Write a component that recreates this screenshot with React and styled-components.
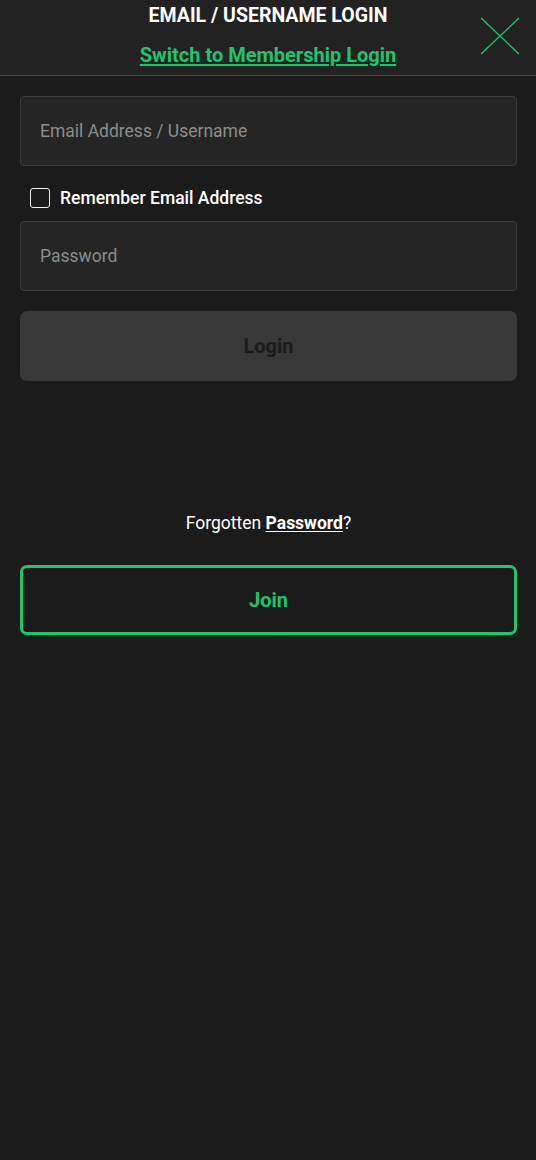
import React from 'react';
import styled, { createGlobalStyle } from 'styled-components';

const GlobalStyle = createGlobalStyle`
    html, body {
        margin: 0;
        padding: 0;
        background: #1b1b1b;
        font-family: Roboto, 'Liberation Sans', sans-serif;
    }
    * {
        box-sizing: border-box;
    }
`;

const Page = styled.div`
    min-height: 1160px;
    background: #1b1b1b;
    color: #fff;
`;

const Header = styled.header`
    position: relative;
    height: 76px;
    background: #222222;
    border-bottom: 1px solid #4b4a56;
    display: flex;
    flex-direction: column;
    align-items: center;
`;

const Title = styled.h1`
    margin: 5px 0 0;
    font-size: 19.5px;
    font-weight: 700;
    line-height: 22px;
    color: #fff;
`;

const SwitchLink = styled.a`
    margin-top: 16px;
    font-size: 20px;
    font-weight: 700;
    line-height: 24px;
    color: #1ec46e;
    text-decoration: underline;
    text-underline-offset: 2px;
    cursor: pointer;
`;

const CloseButton = styled.button`
    position: absolute;
    top: 17px;
    right: 16px;
    width: 40px;
    height: 38px;
    padding: 0;
    border: 0;
    background: none;
    cursor: pointer;
`;

const Form = styled.div`
    display: flex;
    flex-direction: column;
    padding: 20px 19px 0 20px;
`;

const Input = styled.input`
    width: 100%;
    height: 70px;
    padding: 0 19px;
    background: #252525;
    border: 1px solid #3b3b3b;
    border-radius: 4px;
    color: #fff;
    font-family: inherit;
    font-size: 17.5px;
    outline: none;

    &::placeholder {
        color: #8c8c8c;
    }
`;

const RememberRow = styled.label`
    display: flex;
    align-items: center;
    gap: 10px;
    height: 20px;
    margin: 22px 0 13px;
    padding-left: 10px;
    font-size: 17.5px;
    font-weight: 500;
    cursor: pointer;
`;

const Box = styled.span`
    width: 20px;
    height: 20px;
    border: 1.5px solid #eee;
    border-radius: 3px;
`;

const Button = styled.button`
    width: 100%;
    height: 70px;
    margin-top: ${(p) => (p.outline ? '0' : '20px')};
    border-radius: 7px;
    font-family: inherit;
    font-size: 20px;
    font-weight: 700;
    cursor: pointer;
    background: ${(p) => (p.outline ? 'transparent' : '#383838')};
    color: ${(p) => (p.outline ? '#1ec46e' : '#1b1b1b')};
    border: ${(p) => (p.outline ? '3px solid #1ec46e' : '0')};
`;

const Forgotten = styled.p`
    margin: 131px 0 31px;
    text-align: center;
    font-size: 17.5px;
    line-height: 22px;

    a {
        font-weight: 700;
        color: #fff;
        text-decoration: underline;
        text-underline-offset: 2px;
    }
`;

export default function App() {
    return (
        <Page>
            <GlobalStyle />
            <Header>
                <Title>EMAIL / USERNAME LOGIN</Title>
                <SwitchLink>Switch to Membership Login</SwitchLink>
                <CloseButton aria-label="Close">
                    <svg width="40" height="38" viewBox="0 0 40 38">
                        <path d="M1 1 L39 37 M39 1 L1 37" stroke="#1ec46e" strokeWidth="1.3" fill="none" />
                    </svg>
                </CloseButton>
            </Header>
            <Form>
                <Input placeholder="Email Address / Username" />
                <RememberRow>
                    <Box />
                    Remember Email Address
                </RememberRow>
                <Input type="password" placeholder="Password" />
                <Button>Login</Button>
                <Forgotten>
                    Forgotten <a>Password</a>?
                </Forgotten>
                <Button outline>Join</Button>
            </Form>
        </Page>
    );
}
